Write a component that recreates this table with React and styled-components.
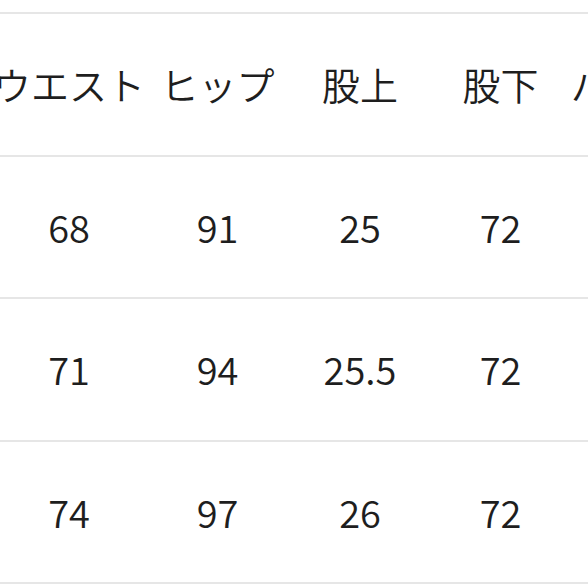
import React from "react";
import styled, { createGlobalStyle } from "styled-components";

const Global = createGlobalStyle`
  html, body { margin: 0; padding: 0; background: #fff; }
  body { font-family: "Noto Sans CJK JP", "Noto Sans", sans-serif; color: #222; }
`;

const Viewport = styled.div`
  width: 588px;
  height: 588px;
  overflow: hidden;
  padding-top: 12px;
  box-sizing: border-box;
`;

const Table = styled.div`
  margin-left: -7px;
  width: 730px;
  border-top: 2px solid #e6e6e6;
`;

const Row = styled.div`
  display: grid;
  grid-template-columns: 152px 145px 140px 141px 152px;
  height: 142.5px;
  box-sizing: border-box;
  border-bottom: 2px solid #e6e6e6;
  align-items: center;
`;

const Cell = styled.div`
  font-size: 38px;
  line-height: 1;
  text-align: center;
  white-space: nowrap;
  font-weight: 350;
  color: #1e1e1e;
`;

const headers = ["ウエスト", "ヒップ", "股上", "股下", "パンツ丈"];
const rows = [
  ["68", "91", "25", "72", "98"],
  ["71", "94", "25.5", "72", "99"],
  ["74", "97", "26", "72", "100"],
];

export default function App() {
  return (
    <>
      <Global />
      <Viewport>
        <Table>
          <Row>
            {headers.map((h) => (
              <Cell key={h}>{h}</Cell>
            ))}
          </Row>
          {rows.map((r, i) => (
            <Row key={i}>
              {r.map((v, j) => (
                <Cell key={j}>{v}</Cell>
              ))}
            </Row>
          ))}
        </Table>
      </Viewport>
    </>
  );
}
